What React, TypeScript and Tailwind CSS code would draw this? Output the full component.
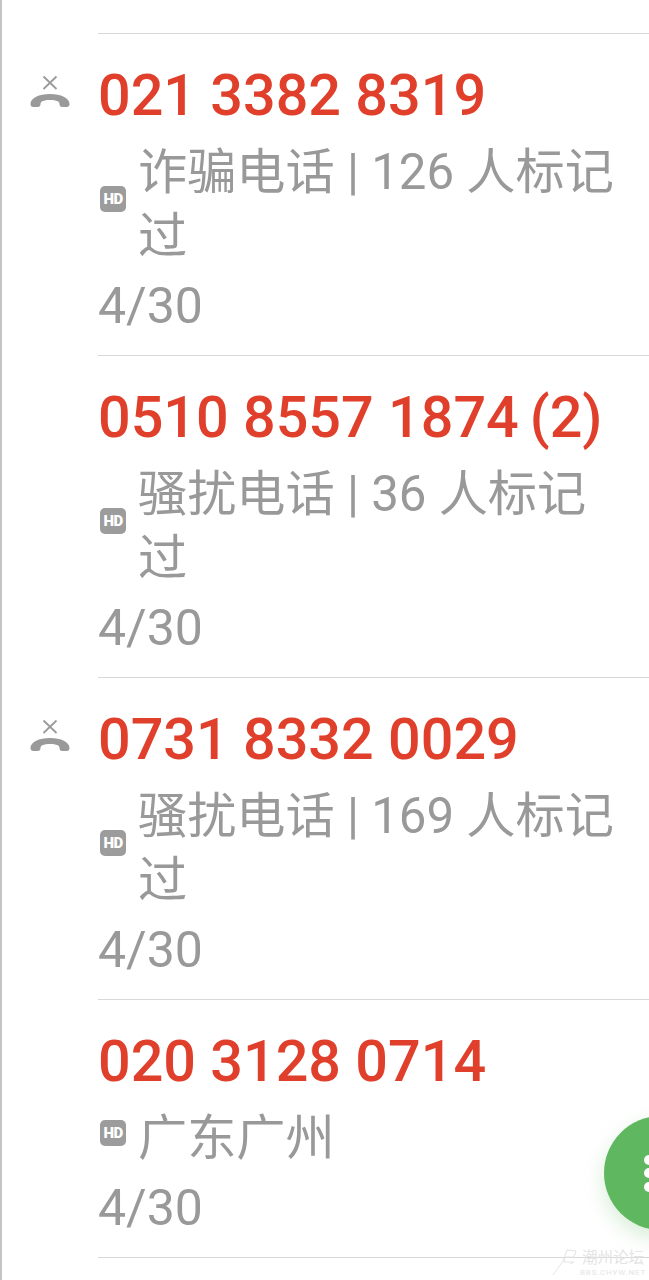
import React from "react";

type Call = {
  number: string;
  count?: string;
  label: string;
  missed: boolean;
};

const calls: Call[] = [
  { number: "021 3382 8319", label: "诈骗电话 | 126 人标记过", missed: true },
  { number: "0510 8557 1874", count: "(2)", label: "骚扰电话 | 36 人标记过", missed: false },
  { number: "0731 8332 0029", label: "骚扰电话 | 169 人标记过", missed: true },
  { number: "020 3128 0714", label: "广东广州", missed: false },
];

function MissedIcon(): React.JSX.Element {
  return (
    <svg width="40" height="33" viewBox="0 0 40 33" className="block">
      <path d="M13.500 1.500l13 12.500M26.500 1.500l-13 12.500" stroke="#9a9a9a" strokeWidth="1.800" fill="none" />
      <path
        d="M.5 29C.5 23 9 19 20 19s19.500 4 19.500 10c0 2-1 3-2.800 3h-4.400c-1.800 0-2.800-1-2.800-3 0-1.300-.5-2.200-1.800-2.800C25.500 25.400 23 25 20 25s-5.500.4-7.700 1.200C11 26.800 10.500 27.700 10.500 29c0 2-1 3-2.800 3H3.300C1.500 32 .5 31 .5 29z"
        fill="#9a9a9a"
      />
    </svg>
  );
}

function HdBadge(): React.JSX.Element {
  return (
    <span className="mb-[10px] ml-[2px] flex h-[26px] w-[26px] shrink-0 items-center justify-center rounded-[5px] bg-[#9c9c9c] text-[15px] font-black leading-none tracking-[-0.5px] text-white">
      HD
    </span>
  );
}

function CallRow({ call }: { call: Call }): React.JSX.Element {
  return (
    <div className="flex">
      <div className="w-[98px] shrink-0 pl-[30px] pt-[42px]">
        {call.missed ? <MissedIcon /> : null}
      </div>
      <div className="min-w-0 flex-1 border-t border-[#d8d8d8] pb-[17px] pt-[29px]">
        <div className="flex h-[66px] items-center gap-[11px] whitespace-nowrap text-[57.5px] font-medium leading-[66px] text-[#e0402b]">
          <span>{call.number}</span>
          {call.count ? <span>{call.count}</span> : null}
        </div>
        <div className="mt-[11px] flex items-center gap-[12px] pr-[34px]">
          <HdBadge />
          <div className="text-[49.200px] leading-[64px] text-[#999999]">{call.label}</div>
        </div>
        <div className="mt-[6px] text-[50px] leading-[64px] text-[#999999]">4/30</div>
      </div>
    </div>
  );
}

export default function App(): React.JSX.Element {
  return (
    <div
      className="relative h-[1280px] w-[649px] overflow-hidden border-l-2 border-[#c4c4c4] bg-white"
      style={{ fontFamily: 'Roboto, "Noto Sans CJK SC", sans-serif' }}
    >
      <div className="-ml-[2px] pt-[33px]">
        {calls.map((call) => (
          <CallRow key={call.number} call={call} />
        ))}
        <div className="ml-[98px] border-t border-[#d8d8d8]" />
      </div>

      <div className="absolute left-[602px] top-[1116px] flex h-[114px] w-[114px] items-center rounded-full bg-[#5fb85f] pl-[40px] shadow-[0_8px_20px_rgba(95,184,95,0.25)]">
        <div className="flex flex-col gap-[3.500px]">
          <span className="h-[10px] w-[10px] rounded-full bg-white" />
          <span className="h-[10px] w-[10px] rounded-full bg-white" />
          <span className="h-[10px] w-[10px] rounded-full bg-white" />
        </div>
      </div>

      {/* forum watermark over the bottom corner */}
      <div className="absolute right-[3px] top-[1247px] flex items-start gap-[2px] text-[#e4e4e4]">
        <svg width="27" height="29" viewBox="0 0 27 29" className="block">
          <path d="M2 28L12 14 16 3l9 1-2 6-9 0-1 5h10l-4 2" fill="#ffffff" stroke="#e4e4e4" strokeWidth="1" />
        </svg>
        <div className="pt-[3px] text-center leading-none">
          <div className="text-[15.500px] leading-[16px]">潮州论坛</div>
          <div className="mt-[2px] text-[8px] leading-[9px] tracking-[0.8px]">BBS.CHYW.NET</div>
        </div>
      </div>
    </div>
  );
}
